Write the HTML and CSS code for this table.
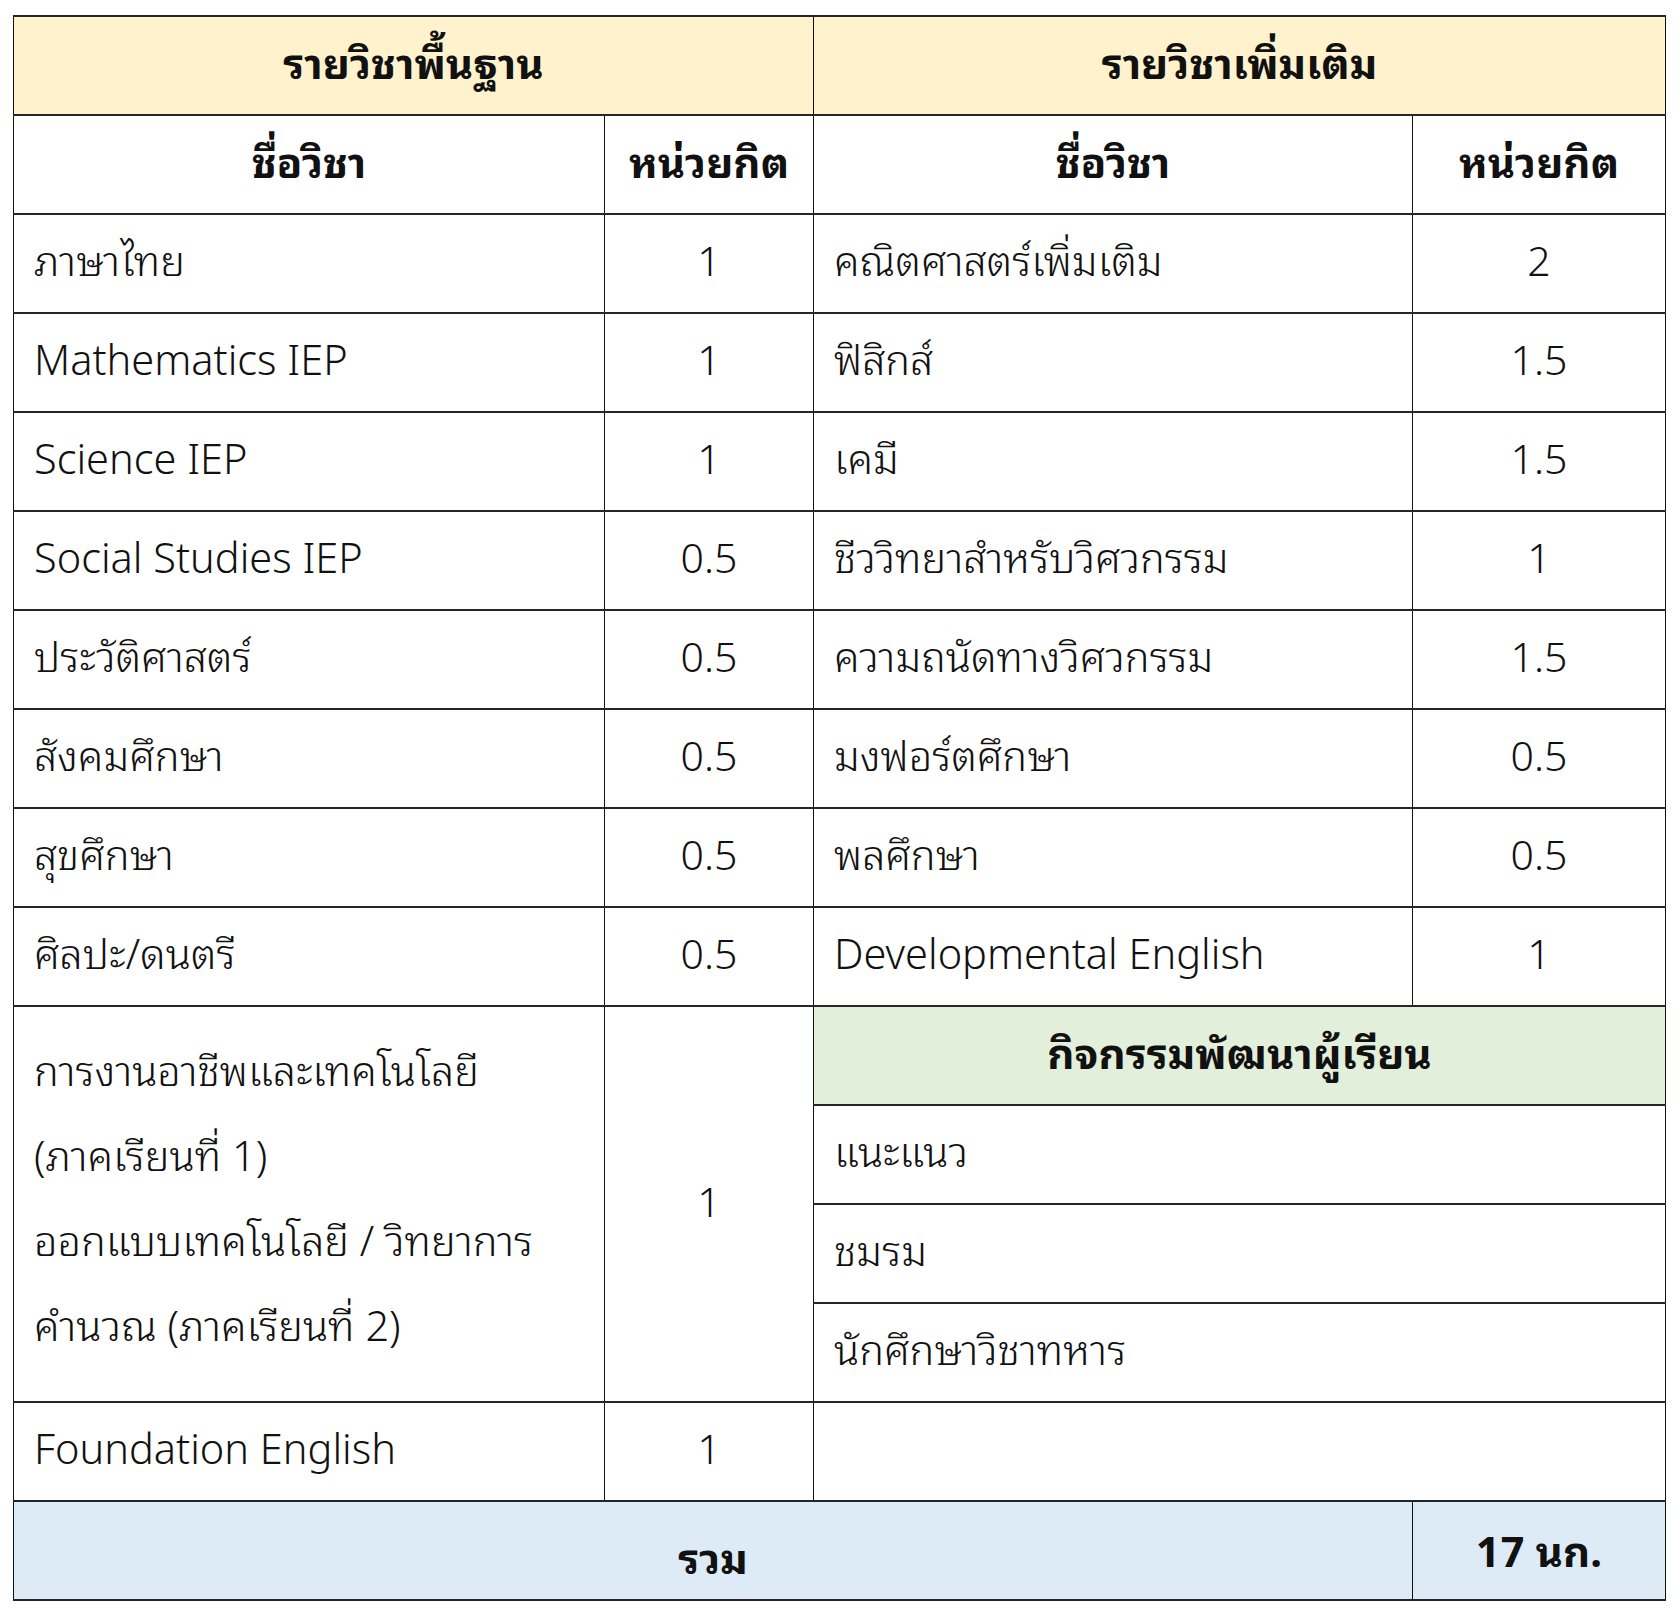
FILE: index.html
```html
<!DOCTYPE html>
<html lang="th">
<head>
<meta charset="utf-8">
<title>โครงสร้างรายวิชา</title>
<link rel="stylesheet" href="styles.css">
</head>
<body>
<table class="curriculum">
  <colgroup>
    <col class="c-name1">
    <col class="c-credit1">
    <col class="c-name2">
    <col class="c-credit2">
  </colgroup>
  <tr class="row head-yellow">
    <th colspan="2">รายวิชาพื้นฐาน</th>
    <th colspan="2">รายวิชาเพิ่มเติม</th>
  </tr>
  <tr class="row subhead">
    <th>ชื่อวิชา</th>
    <th>หน่วยกิต</th>
    <th>ชื่อวิชา</th>
    <th>หน่วยกิต</th>
  </tr>
  <tr class="row">
    <td class="name">ภาษาไทย</td><td class="num">1</td>
    <td class="name">คณิตศาสตร์เพิ่มเติม</td><td class="num">2</td>
  </tr>
  <tr class="row">
    <td class="name">Mathematics IEP</td><td class="num">1</td>
    <td class="name">ฟิสิกส์</td><td class="num">1.5</td>
  </tr>
  <tr class="row">
    <td class="name">Science IEP</td><td class="num">1</td>
    <td class="name">เคมี</td><td class="num">1.5</td>
  </tr>
  <tr class="row">
    <td class="name">Social Studies IEP</td><td class="num">0.5</td>
    <td class="name">ชีววิทยาสำหรับวิศวกรรม</td><td class="num">1</td>
  </tr>
  <tr class="row">
    <td class="name">ประวัติศาสตร์</td><td class="num">0.5</td>
    <td class="name">ความถนัดทางวิศวกรรม</td><td class="num">1.5</td>
  </tr>
  <tr class="row">
    <td class="name">สังคมศึกษา</td><td class="num">0.5</td>
    <td class="name">มงฟอร์ตศึกษา</td><td class="num">0.5</td>
  </tr>
  <tr class="row">
    <td class="name">สุขศึกษา</td><td class="num">0.5</td>
    <td class="name">พลศึกษา</td><td class="num">0.5</td>
  </tr>
  <tr class="row">
    <td class="name">ศิลปะ/ดนตรี</td><td class="num">0.5</td>
    <td class="name">Developmental English</td><td class="num">1</td>
  </tr>
  <tr class="row">
    <td class="name multi" rowspan="4">การงานอาชีพและเทคโนโลยี<br>(ภาคเรียนที่ 1)<br>ออกแบบเทคโนโลยี / วิทยาการ<br>คำนวณ (ภาคเรียนที่ 2)</td>
    <td class="num" rowspan="4">1</td>
    <th class="head-green" colspan="2">กิจกรรมพัฒนาผู้เรียน</th>
  </tr>
  <tr class="row">
    <td class="name" colspan="2">แนะแนว</td>
  </tr>
  <tr class="row">
    <td class="name" colspan="2">ชมรม</td>
  </tr>
  <tr class="row">
    <td class="name" colspan="2">นักศึกษาวิชาทหาร</td>
  </tr>
  <tr class="row">
    <td class="name">Foundation English</td><td class="num">1</td>
    <td class="name" colspan="2"></td>
  </tr>
  <tr class="row total">
    <th colspan="3" class="total-label">รวม</th>
    <th class="total-value">17 นก.</th>
  </tr>
</table>
</body>
</html>
```
FILE: styles.css
```css
html, body {
  margin: 0;
  padding: 0;
  background: #ffffff;
}

body {
  padding: 15px 15px 15px 13px;
  font-family: "Noto Sans Thai Looped", "Noto Sans Thai", "Noto Sans", "Open Sans", sans-serif;
  color: #111111;
}

.curriculum {
  border-collapse: collapse;
  table-layout: fixed;
  width: 1652px;
}

.c-name1 { width: 591px; }
.c-credit1 { width: 209px; }
.c-name2 { width: 599px; }
.c-credit2 { width: 253px; }

.curriculum th,
.curriculum td {
  border-top: 2px solid #262626;
  border-bottom: 2px solid #262626;
  border-left: 1.5px solid #111111;
  border-right: 1.5px solid #111111;
  height: 85px;
  padding: 0 20px 12px 20px;
  vertical-align: middle;
}

.curriculum th {
  font-weight: 700;
  font-size: 42px;
  text-align: center;
}

.curriculum td {
  font-weight: 300;
  font-size: 41px;
}

.curriculum td.name {
  font-size: 41.5px;
}

.curriculum td.num {
  text-align: center;
  padding: 0 0 12px 0;
}

.head-yellow th {
  background: #fff2cc;
}

.head-green {
  background: #e2efda;
}

.total th {
  background: #ddebf7;
}

.curriculum td.multi {
  line-height: 85px;
  padding-top: 0;
  padding-bottom: 18px;
}

.curriculum th.total-label {
  padding-top: 10px;
  padding-bottom: 2px;
}

.curriculum th.total-value {
  padding-top: 3px;
  padding-bottom: 9px;
}
```
